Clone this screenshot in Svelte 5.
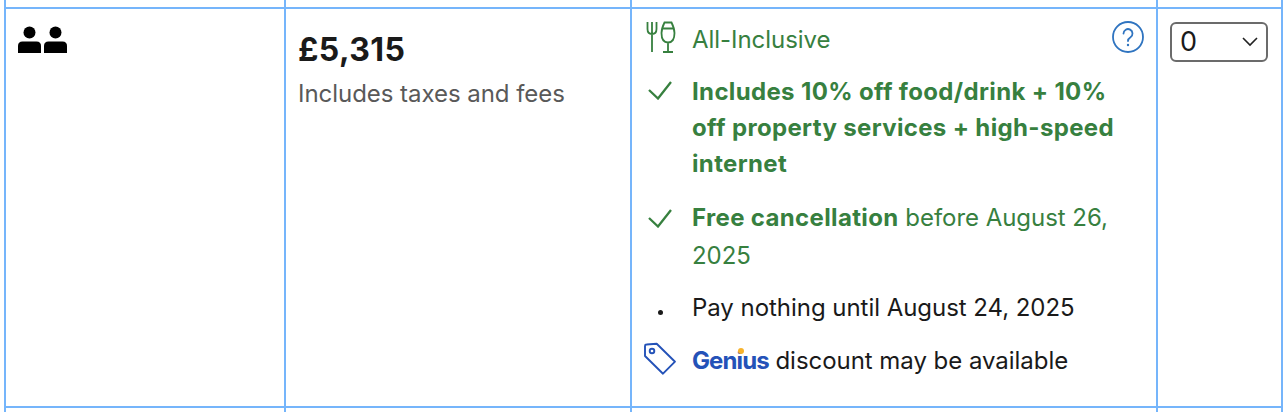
<script>
	const features = [
		{ cls: "", bold: "Includes 10% off food/drink + 10% off property services + high-speed internet", rest: "" },
		{ cls: "free", bold: "Free cancellation", rest: " before August 26, 2025" }
	];
</script>

<table>
	<colgroup>
		<col class="c1" />
		<col class="c2" />
		<col class="c3" />
		<col class="c4" />
	</colgroup>
	<tbody>
		<tr class="stub"><td></td><td></td><td></td><td></td></tr>
		<tr>
			<td class="guests">
				<svg width="50" height="28" viewBox="0 0 50 28" fill="#000" aria-label="2 guests">
					<circle cx="11.500" cy="6.500" r="6" />
					<path d="M0 27v-7q0-4.500 4.500-4.500h14q4.500 0 4.500 4.500v7z" />
					<circle cx="37.500" cy="6.500" r="6" />
					<path d="M26 27v-7q0-4.500 4.500-4.500h14q4.500 0 4.500 4.500v7z" />
				</svg>
			</td>
			<td class="price">
				<div class="amount">£5,315</div>
				<div class="taxes">Includes taxes and fees</div>
			</td>
			<td class="details">
				<svg class="help" width="32" height="32" viewBox="0 0 32 32" fill="none" stroke="#2f74c0" stroke-width="1.800">
					<circle cx="16" cy="16" r="15" />
					<path d="M11.500 12.500a4.500 4.500 0 1 1 7 3.800c-1.600 1-2.500 1.800-2.500 3.700" stroke-linecap="round" />
					<circle cx="16" cy="24" r="1.200" fill="#2f74c0" stroke="none" />
				</svg>
				<ul>
					<li class="green meal">
						<span class="ico">
							<svg width="30" height="32" viewBox="0 0 30 32" fill="none" stroke="#37803f" stroke-width="1.800">
								<path d="M1.500 1v7q0 5 4.500 5t4.500-5V1M6 1v30" />
								<path d="M18.500 1.500h7q3 6 3 10.500 0 9.500-6.500 9.500T15.500 12q0-4.500 3-10.500zM16.500 7.500h11M22 21.500V31M17 31h10" />
							</svg>
						</span>
						<span>All-Inclusive</span>
					</li>
					{#each features as f}
						<li class="green {f.cls}">
							<span class="ico">
								<svg class="check" width="26" height="20" viewBox="0 0 26 20" fill="none" stroke="#37803f" stroke-width="2.300">
									<path d="M3 10l9 8.500L25 2" />
								</svg>
							</span>
							<span><b>{f.bold}</b>{f.rest}</span>
						</li>
					{/each}
					<li class="pay">
						<span class="ico"><i class="dot"></i></span>
						<span>Pay nothing until August 24, 2025</span>
					</li>
					<li class="genius-row">
						<span class="ico">
							<svg class="tag" width="34" height="34" viewBox="0 0 34 34" fill="none" stroke="#2452b8" stroke-width="1.900">
								<path d="M1 4q0-1.500 1.500-1.500L12.700 1.700 31 19.700 19 31.700 1 14z" stroke-linejoin="round" />
								<circle cx="8" cy="9" r="2.300" />
							</svg>
						</span>
						<span><span class="genius">Genius<i></i></span> discount may be available</span>
					</li>
				</ul>
			</td>
			<td class="qty">
				<label class="select">
					<span>0</span>
					<svg width="16" height="10" viewBox="0 0 16 10" fill="none" stroke="#222" stroke-width="1.600"><path d="M1 1l7 7 7-7" /></svg>
				</label>
			</td>
		</tr>
		<tr class="stub"><td></td><td></td><td></td><td></td></tr>
	</tbody>
</table>

<style>
	:global(body) {
		margin: 0;
		background: #fff;
		overflow: hidden;
	}
	table {
		border-collapse: collapse;
		table-layout: fixed;
		width: 1277px;
		margin-left: 4px;
		font-family: Inter, "Liberation Sans", sans-serif;
		font-size: 24px;
		line-height: 36px;
		letter-spacing: -0.04px;
		color: #1a1a1a;
	}
	.c1 { width: 280px; }
	.c2 { width: 346px; }
	.c3 { width: 526px; }
	.c4 { width: 125px; }
	td {
		border: 2px solid #75b5fb;
		vertical-align: top;
		padding: 0;
	}
	.stub td {
		height: 7px;
		border-top: 0;
	}
	tr:last-child td {
		border-bottom: 0;
	}
	.guests {
		padding: 17px 0 0 12px;
		line-height: 0;
	}
	.price {
		padding: 23px 12px 0 12px;
	}
	.amount {
		font-size: 32px;
		font-weight: 700;
		letter-spacing: 0.4px;
		line-height: 36px;
	}
	.taxes {
		margin-top: 8px;
		color: #595959;
	}
	.details {
		position: relative;
		padding: 13px 12px 27px 12px;
	}
	.help {
		position: absolute;
		top: 12px;
		right: 12px;
	}
	ul {
		list-style: none;
		margin: 0;
		padding: 0;
		display: flex;
		flex-direction: column;
		gap: 16px;
	}
	li {
		display: flex;
	}
	.green {
		color: #37803f;
	}
	b {
		font-weight: 700;
		letter-spacing: 0.35px;
	}
	.ico {
		flex: 0 0 48px;
		height: 36px;
		display: flex;
		align-items: center;
	}
	.ico svg {
		margin-left: 2px;
	}
	.meal svg {
		margin-bottom: 6px;
	}
	.check {
		margin-bottom: 4px;
	}
	.free {
		line-height: 38px;
		margin-top: 1px;
	}
	.free .ico {
		height: 38px;
	}
	.free .check {
		margin-bottom: 0;
	}
	.pay {
		margin-top: -1px;
	}
	.genius-row {
		margin-top: 1px;
	}
	.ico .tag {
		margin: 0 0 4px 0;
	}
	.dot {
		width: 5px;
		height: 5px;
		border-radius: 50%;
		background: #1a1a1a;
		margin: 8px 0 0 14px;
	}
	.genius {
		position: relative;
		color: #2452b8;
		font-weight: 700;
		letter-spacing: -0.9px;
	}
	.genius i {
		position: absolute;
		left: 46px;
		top: 2px;
		width: 6px;
		height: 6px;
		border-radius: 50%;
		background: #f7b32c;
	}
	.qty {
		padding: 13px 12px 12px;
	}
	.select {
		display: flex;
		align-items: center;
		justify-content: space-between;
		box-sizing: border-box;
		height: 40px;
		width: 98px;
		padding: 0 8px 0 8px;
		border: 2px solid #6b6b6b;
		border-radius: 6px;
		font-size: 27px;
		color: #1a1a1a;
	}
</style>
